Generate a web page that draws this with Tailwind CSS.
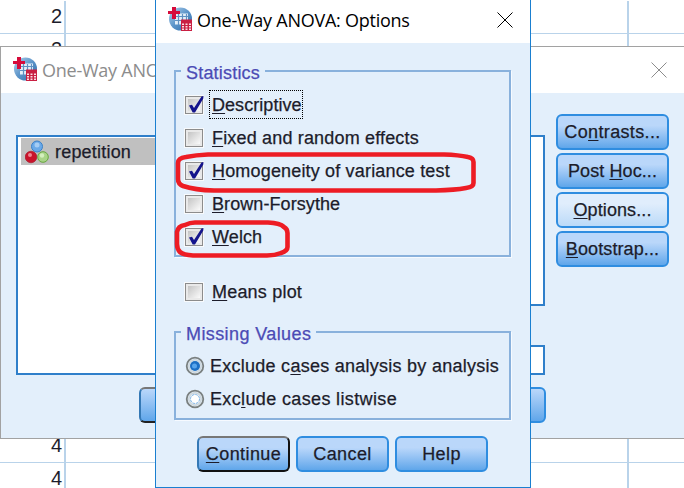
<!DOCTYPE html>
<html lang="en">
<head>
<meta charset="utf-8">
<title>One-Way ANOVA: Options</title>
<script src="https://cdn.jsdelivr.net/npm/@tailwindcss/browser@4"></script>
</head>
<body class="relative h-[488px] w-[684px] overflow-hidden bg-white font-['Liberation_Sans',Arial,sans-serif] text-[18px] text-[#1c1c2a]">
<svg class="absolute size-0">
  <defs>
    <linearGradient id="globe" x1="0" y1="0" x2="1" y2="1"><stop offset="0" stop-color="#b4d2ec"/><stop offset=".5" stop-color="#5b94c9"/><stop offset="1" stop-color="#2f6dab"/></linearGradient>
    <linearGradient id="well" x1="0" y1="0" x2="1" y2="1"><stop offset="0" stop-color="#c4c4c4"/><stop offset="1" stop-color="#fafafa"/></linearGradient>
  </defs>
  <symbol id="app" viewBox="0 0 24 24">
    <circle cx="12.5" cy="12" r="11.5" fill="url(#globe)"/>
    <path d="M7 6.500h13v11H7z" fill="#e4eff9"/>
    <path d="M8 9.500h12M7 13.500h12M10.500 7v11M14.500 7v11M18.500 7v7" stroke="#5f91c2" stroke-width="1.200"/>
    <path d="M4 0h4v4h4v3H8v5H4V7H0V4h4z" fill="#d60b3a"/>
    <path d="M13 12.500h11V24H13z" fill="#c91f42"/>
    <path d="M14 16.500h2v1.500h-2zM17.500 16.500h2v1.500h-2zM21 16.500h2v1.500h-2zM14 19h2v1.500h-2zM17.500 19h2v1.500h-2zM21 19h2v1.500h-2zM14 21.500h2V23h-2zM17.500 21.500h2V23h-2zM21 21.500h2V23h-2z" fill="#fbdde3"/>
  </symbol>
  <symbol id="box" viewBox="0 0 20 20">
    <path d="M0 0h20v20H0z" fill="#f8fafc"/>
    <path d="M1 1h18v18H1z" fill="#8c8c8c"/>
    <path d="M2 2h16v16H2z" fill="#e9e9e9"/>
    <path d="M4 4h12v12H4z" fill="url(#well)"/>
  </symbol>
  <symbol id="tick" viewBox="0 0 20 20">
    <path d="M5 10.500 8 9.800 10 13 17.500 1.500 19.500 1 19.300 3.500 11 17.500H8.700z" fill="#14148c"/>
  </symbol>
  <symbol id="radio" viewBox="0 0 20 20">
    <circle cx="10" cy="10" r="8.300" fill="#dfe9f0" stroke="#7a8080" stroke-width="1.800"/>
    <circle cx="10" cy="10" r="6.200" fill="none" stroke="#c3cdd3" stroke-width="1"/>
  </symbol>
</svg>

<!-- Data sheet behind the windows -->
<div class="grid auto-rows-[33px] grid-cols-[66px_563px_1fr] pt-px text-[20px] leading-[31px]">
  <div class="border-r-2 border-b border-[#b9d3ea] pr-[2px] text-right">2</div><div class="border-r-2 border-b border-[#b9d3ea]"></div><div class="border-b border-[#b9d3ea]"></div>
  <div class="border-r-2 border-[#b9d3ea] pr-[2px] text-right"><div class="h-[12px] overflow-hidden">2</div></div><div class="border-r-2 border-[#b9d3ea]"></div><div></div>
  <div class="row-span-11 border-r-2 border-[#b9d3ea]"></div><div class="row-span-11"></div><div class="row-span-11"></div>
  <div class="border-r-2 border-b border-[#b9d3ea] pr-[2px] text-right">4</div><div class="border-r-2 border-b border-[#b9d3ea]"></div><div class="border-b border-[#b9d3ea]"></div>
  <div class="border-r-2 border-[#b9d3ea] pr-[2px] text-right">4</div><div class="border-r-2 border-[#b9d3ea]"></div><div></div>
</div>

<!-- One-Way ANOVA window -->
<section class="absolute top-[46px] left-0 flex h-[393px] w-[684px] flex-col border-y border-l border-[#a2a2a2] bg-[#e3effb]">
  <header class="flex h-[46px] shrink-0 items-center bg-white pr-[17px] pl-[12px] text-[#8c8c8c]">
    <svg class="-mt-[2px] size-6 shrink-0"><use href="#app"/></svg>
    <h2 class="ml-[5px] grow font-['Open_Sans',sans-serif] text-[18px] tracking-[-.25px] whitespace-nowrap">One-Way ANOVA</h2>
    <svg class="-mt-px size-4" viewBox="0 0 16 16"><path d="M.5.500l15 15M15.500.500l-15 15" stroke="#8c8c8c"/></svg>
  </header>
  <div class="flex grow">
    <div class="ml-[15px] flex w-[529px] flex-col pt-[42px]">
      <div class="flex h-[240px] justify-between">
        <div class="w-[220px] border-2 border-[#2f7fca] bg-white pt-px pl-[3px]">
          <div class="flex h-[27px] items-center bg-[#c0c0c0] pl-[4px]">
            <svg class="size-6" viewBox="0 0 24 24">
              <circle cx="12" cy="6.500" r="5.500" fill="#6aa9e8" stroke="#3b81c8"/><circle cx="12" cy="5" r="2.500" fill="#a5cdf4"/>
              <circle cx="6" cy="17" r="5.800" fill="#c9142b" stroke="#a50d22" stroke-width=".6"/><circle cx="5" cy="15" r="2" fill="#ef8490"/>
              <circle cx="18" cy="17" r="5.300" fill="#a9d488" stroke="#67a73e"/><circle cx="17" cy="15.500" r="2.200" fill="#d4efbe"/>
            </svg>
            <span class="ml-[6px] pt-[2px] tracking-[.2px] [-webkit-text-stroke:.25px]">repetition</span>
          </div>
        </div>
        <div class="flex w-[220px] flex-col justify-between">
          <div class="h-[171px] border-2 border-[#2f7fca] bg-white"></div>
          <div class="h-[30px] border-2 border-[#2f7fca] bg-white"></div>
        </div>
      </div>
      <div class="mt-[12px] flex justify-between pl-[123px]">
        <div class="h-[36px] w-[93px] rounded-[6px] border-2 border-t-[#777] border-r-[#222] border-b-[#222] border-l-[#3478b5] bg-linear-to-b from-[#bad7fa] to-[#5fa6ea]"></div>
        <div class="-mr-px h-[36px] w-[93px] rounded-[6px] border-2 border-[#2f8de0] bg-linear-to-b from-[#bad7fa] to-[#5fa6ea]"></div>
      </div>
    </div>
    <div class="ml-[11px] flex w-[113px] flex-col gap-[3px] pt-[21px] text-center leading-[33px] tracking-[.2px] [-webkit-text-stroke:.25px]">
      <button class="h-[36px] rounded-[6px] border-2 border-[#2f8de0] bg-linear-to-b from-[#bad7fa] from-30% to-[#5fa6ea]"><span class="tracking-[.35px]">Co<u class="underline-offset-2">n</u>trasts...</span></button>
      <button class="h-[36px] rounded-[6px] border-2 border-[#2f8de0] bg-linear-to-b from-[#bad7fa] from-30% to-[#5fa6ea]"><span class="tracking-[.1px]">Post <u class="underline-offset-2">H</u>oc...</span></button>
      <button class="h-[36px] rounded-[6px] border-2 border-[#2f8de0] bg-linear-to-b from-[#e0edfc] from-30% to-[#bbdaf8]"><span class="tracking-[.1px]"><u class="underline-offset-2">O</u>ptions...</span></button>
      <button class="h-[36px] rounded-[6px] border-2 border-[#2f8de0] bg-linear-to-b from-[#bad7fa] from-30% to-[#5fa6ea]"><span class="tracking-[.1px]"><u class="underline-offset-2">B</u>ootstrap...</span></button>
    </div>
  </div>
</section>

<!-- Options dialog -->
<section class="absolute top-0 left-[155px] flex h-[488px] w-[376px] flex-col border-x border-b border-[#1a7fd0] bg-[#e3effb] whitespace-nowrap">
  <header class="flex h-[43px] shrink-0 items-center bg-white pr-[17px] pl-[12px] text-black">
    <svg class="-mt-[5px] size-6 shrink-0"><use href="#app"/></svg>
    <h1 class="-mt-[3px] ml-[5px] grow font-['Open_Sans',sans-serif] text-[18px] tracking-[-.25px]">One-Way ANOVA: Options</h1>
    <svg class="-mt-[4px] size-4" viewBox="0 0 16 16"><path d="M.5.500l15 15M15.500.500l-15 15" stroke="#000"/></svg>
  </header>
  <div class="relative mt-[27px] ml-[18px] flex h-[187px] w-[337px] flex-col border-2 border-[#89b1dc] pt-[16px] pl-[8px] shadow-[1px_1px_0_#f6faff] [-webkit-text-stroke:.25px]">
    <h3 class="absolute -top-[12px] left-[5px] bg-[#e3effb] px-[5px] leading-[26px] text-[#4b4bb5]"><span class="tracking-[.2px]">Statistics</span></h3>
    <label class="flex h-[33px] items-center"><svg class="size-5"><use href="#box"/><use href="#tick"/></svg><span class="ml-[5px] h-[29px] w-[94px] border border-dotted border-black px-[2px] leading-[29px] tracking-[.05px]"><u class="underline-offset-2">D</u>escriptive</span></label>
    <label class="flex h-[33px] items-center"><svg class="size-5"><use href="#box"/></svg><span class="ml-[8px] pt-[2px] tracking-[.17px]"><u class="underline-offset-2">F</u>ixed and random effects</span></label>
    <label class="flex h-[33px] items-center"><svg class="size-5"><use href="#box"/><use href="#tick"/></svg><span class="ml-[8px] pt-[2px] tracking-[.17px]"><u class="underline-offset-2">H</u>omogeneity of variance test</span></label>
    <label class="flex h-[33px] items-center"><svg class="size-5"><use href="#box"/></svg><span class="ml-[8px] pt-[2px] tracking-[.08px]"><u class="underline-offset-2">B</u>rown-Forsythe</span></label>
    <label class="flex h-[33px] items-center"><svg class="size-5"><use href="#box"/><use href="#tick"/></svg><span class="ml-[8px] pt-[2px] tracking-[.1px]"><u class="underline-offset-2">W</u>elch</span></label>
  </div>
  <label class="mt-[18px] ml-[28px] flex h-[33px] items-center [-webkit-text-stroke:.25px]"><svg class="size-5"><use href="#box"/></svg><span class="ml-[8px] pt-[2px] tracking-[.2px]"><u class="underline-offset-2">M</u>eans plot</span></label>
  <div class="relative mt-[23px] ml-[18px] flex h-[89px] w-[337px] flex-col border-2 border-[#89b1dc] pt-[16px] pl-[9px] shadow-[1px_1px_0_#f6faff] [-webkit-text-stroke:.25px]">
    <h3 class="absolute -top-[12px] left-[5px] bg-[#e3effb] px-[5px] leading-[26px] text-[#4b4bb5]"><span class="tracking-[.4px]">Missing Values</span></h3>
    <label class="flex h-[33px] items-center"><svg class="size-5"><use href="#radio"/><circle cx="10" cy="10" r="5" fill="#1d70c5"/><circle cx="9.500" cy="10" r="2.500" fill="#58a5ec"/></svg><span class="ml-[5px] pt-[2px] tracking-[.26px]">Exclude c<u class="underline-offset-2">a</u>ses analysis by analysis</span></label>
    <label class="flex h-[33px] items-center"><svg class="size-5"><use href="#radio"/><circle cx="10" cy="10" r="4.500" fill="#fff" stroke="#7db3e6" stroke-dasharray="2.500 1"/></svg><span class="ml-[5px] pt-[2px] tracking-[.36px]">Exc<u class="underline-offset-2">l</u>ude cases listwise</span></label>
  </div>
  <footer class="mt-[16px] ml-[41px] flex gap-[6px] leading-[33px] [-webkit-text-stroke:.25px]">
    <button class="h-[36px] w-[93px] rounded-[6px] border-2 border-t-[#777] border-r-[#111] border-b-[#111] border-l-[#3478b5] bg-linear-to-b from-[#bad7fa] from-30% to-[#5fa6ea]"><span class="tracking-[.4px]"><u class="underline-offset-2">C</u>ontinue</span></button>
    <button class="h-[36px] w-[93px] rounded-[6px] border-2 border-[#2f8de0] bg-linear-to-b from-[#bad7fa] from-30% to-[#5fa6ea]"><span class="tracking-[.4px]">Cancel</span></button>
    <button class="h-[36px] w-[93px] rounded-[6px] border-2 border-[#2f8de0] bg-linear-to-b from-[#bad7fa] from-30% to-[#5fa6ea]"><span class="tracking-[.4px]">Help</span></button>
  </footer>
</section>

<!-- Hand-drawn highlights -->
<svg class="pointer-events-none absolute inset-0" width="684" height="488" fill="none" stroke="#ed1c24" stroke-width="4.600" stroke-linejoin="round">
  <path d="M208 154.500H444Q459 155 468 157Q473.500 158 473.500 162V183Q473.500 187 466 188Q455 190 436 190.500H214Q195 190 183 186Q178 184 178 179V163Q178 158 186 157Q196 155 208 154.500Z"/>
  <path d="M195 222.500H268Q280 223 284 227Q287.500 229 287.500 233V247Q287.500 251 281 253Q275 255.500 267 255.500H193Q183 255 180 252Q177 249 177 244V232Q178 226 185 225Q190 222.500 195 222.500Z"/>
</svg>
</body>
</html>
